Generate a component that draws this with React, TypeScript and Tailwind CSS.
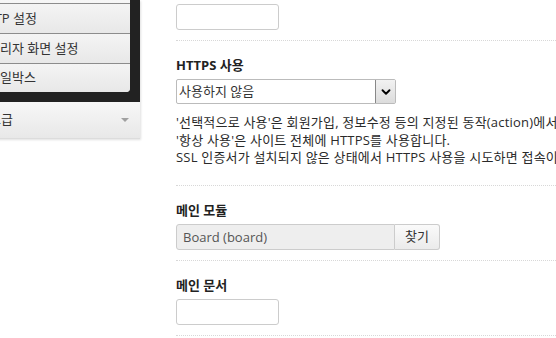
import { ChevronDown } from 'lucide-react';

const font = 'font-["Open_Sans","Noto_Sans_CJK_KR",sans-serif]';

function Sidebar() {
  return (
    <div className="w-[162px] -ml-[20px] shrink-0 pr-[2px] pb-[3px]">
      <div className="shadow-[1px_1px_2px_rgba(0,0,0,0.12)]">
        {/* dark group with submenu */}
        <div className="bg-[#222] pr-[10px] pb-[10px]">
          <div className="rounded-br-[4px] overflow-hidden bg-gradient-to-b from-[#f6f6f6] to-[#e9e9e9] text-[13px] text-[#333]">
            <div className="h-[4px] border-b border-[#8c8c8c]" />
            <div className="h-[30px] border-b border-[#8c8c8c] flex items-center pl-[8px] bg-gradient-to-b from-[#f4f4f4] to-[#e8e8e8]">FTP 설정</div>
            <div className="h-[30px] border-b border-[#8c8c8c] flex items-center pl-[8px] bg-gradient-to-b from-[#f4f4f4] to-[#e8e8e8]">관리자 화면 설정</div>
            <div className="h-[28px] flex items-center pl-[8px] bg-gradient-to-b from-[#f4f4f4] to-[#e8e8e8]">파일박스</div>
          </div>
        </div>
        {/* collapsed group */}
        <div className="h-[37px] flex items-center justify-between pl-[9px] pr-[11px] bg-gradient-to-b from-[#f7f7f7] to-[#e8e8e8] border-b border-[#dcdcdc] text-[13px] text-[#333]">
          <span>고급</span>
          <span className="w-0 h-0 border-x-[4px] border-x-transparent border-t-[4px] border-t-[#a0a0a0]" />
        </div>
      </div>
    </div>
  );
}

function Field({ label, children, first }: { label?: string; children: React.ReactNode; first?: boolean }) {
  return (
    <div className={`border-b border-dotted border-[#d8d8d8] ${first ? 'pt-[4px] pb-[10px]' : 'pt-[15px] pb-[10px]'}`}>
      {label && <div className="text-[13px] leading-[18px] font-bold text-[#222] mb-[5px]">{label}</div>}
      {children}
    </div>
  );
}

export default function App() {
  return (
    <div className={`w-[556px] h-[338px] overflow-hidden bg-white flex ${font}`}>
      <Sidebar />
      <div className="flex-1 ml-[34px] min-w-0">
        <Field first>
          <input className="block w-[103px] h-[26px] border border-[#ccc] rounded-[3px] bg-white" />
        </Field>

        <div className="border-b border-dotted border-[#d8d8d8] pt-[15px] pb-[18px]">
          <div className="text-[13px] leading-[18px] font-bold text-[#222] mb-[5px]">HTTPS 사용</div>
          <div className="flex w-[220px] h-[25px] border border-[#bbb] rounded-[2px] bg-white">
            <span className="flex-1 text-[13px] leading-[23px] pl-[2px] text-[#333]">사용하지 않음</span>
            <span className="w-[20px] h-[23px] flex items-center justify-center bg-gradient-to-b from-[#f2f2f2] to-[#dcdcdc] border-l border-[#888]">
              <ChevronDown className="w-[14px] h-[14px] text-black" strokeWidth={3.2} />
            </span>
          </div>
          <div className="mt-[10px] text-[13px] leading-[17.5px] tracking-[0.2px] text-[#2a2a2a] whitespace-nowrap">
            <p>'선택적으로 사용'은 회원가입, 정보수정 등의 지정된 동작(action)에서 HTTPS를 사용합니다.</p>
            <p>'항상 사용'은 사이트 전체에 HTTPS를 사용합니다.</p>
            <p>SSL 인증서가 설치되지 않은 상태에서 HTTPS 사용을 시도하면 접속이 되지 않을 수 있습니다.</p>
          </div>
        </div>

        <Field label="메인 모듈">
          <div className="flex w-[264px] h-[26px]">
            <div className="flex-1 bg-[#eee] border border-[#ccc] rounded-l-[3px] text-[13px] leading-[24px] pl-[6px] text-[#555]">Board (board)</div>
            <button className="w-[45px] border border-l-0 border-[#ccc] rounded-r-[3px] bg-gradient-to-b from-[#fafafa] to-[#ebebeb] text-[13px] text-[#333]">찾기</button>
          </div>
        </Field>

        <Field label="메인 문서">
          <input className="block w-[103px] h-[26px] border border-[#ccc] rounded-[3px] bg-white" />
        </Field>
      </div>
    </div>
  );
}
